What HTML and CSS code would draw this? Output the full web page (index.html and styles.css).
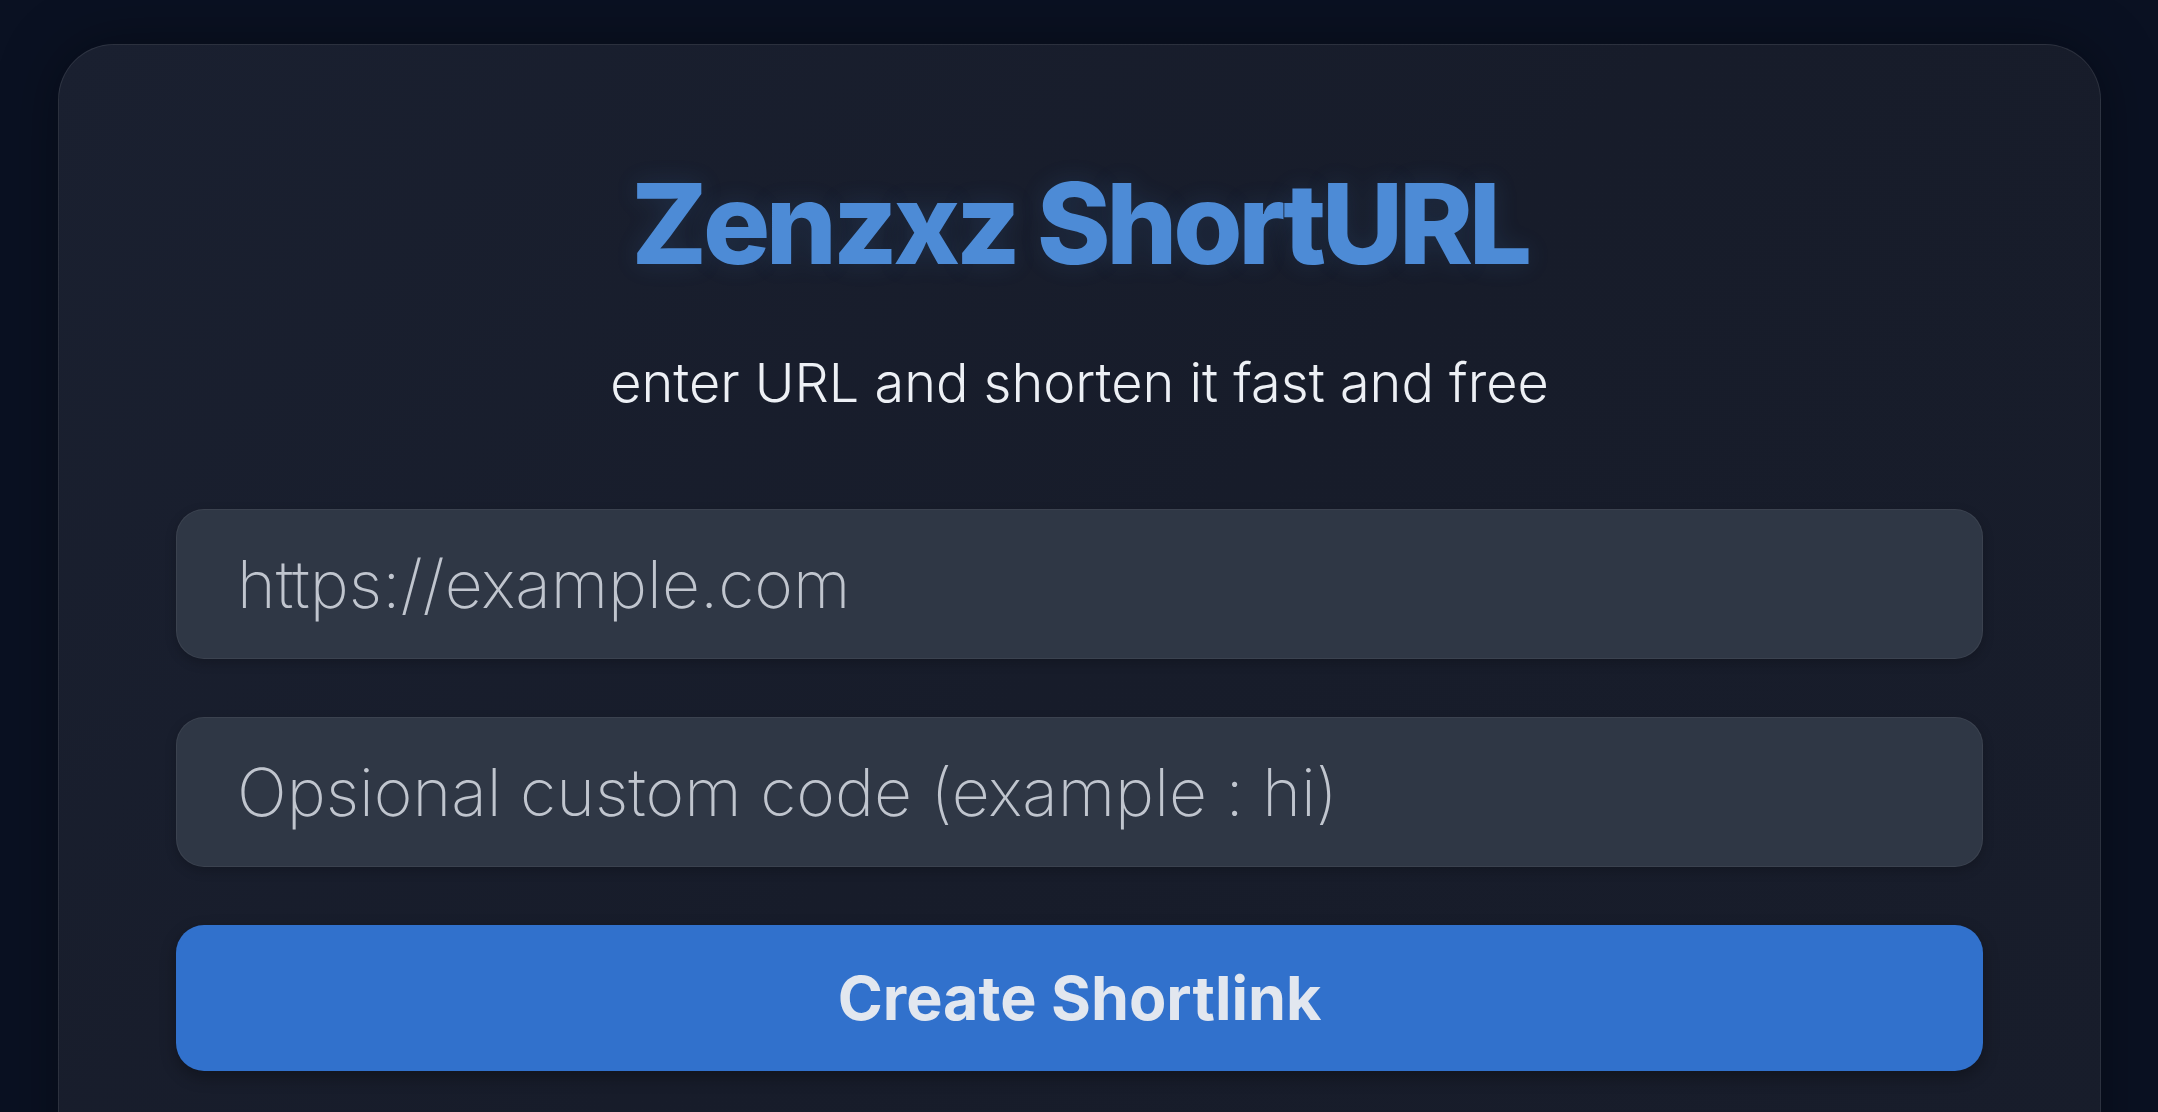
FILE: index.html
```html
<!DOCTYPE html>
<html lang="en">
<head>
<meta charset="utf-8">
<title>Zenzxz ShortURL</title>
<link rel="stylesheet" href="styles.css">
</head>
<body>
<main class="page">
  <section class="card">
    <h1 class="title">Zenzxz ShortURL</h1>
    <p class="subtitle">enter URL and shorten it fast and free</p>
    <form class="form">
      <input class="field" type="text" placeholder="https://example.com">
      <input class="field" type="text" placeholder="Opsional custom code (example : hi)">
      <button class="submit" type="button">Create Shortlink</button>
    </form>
  </section>
</main>
</body>
</html>
```
FILE: styles.css
```css
html, body {
  margin: 0;
  padding: 0;
  height: 100%;
  overflow: hidden;
}
body {
  background: #0a1122;
  font-family: "Inter", "Noto Sans", sans-serif;
}
.page {
  padding: 44px 57px 0 58px;
}
.card {
  box-sizing: border-box;
  min-height: 1200px;
  background: linear-gradient(135deg, #1a2030 0%, #171c2a 50%, #181d2b 100%);
  border: 1px solid rgba(255, 255, 255, 0.09);
  border-radius: 56px;
  padding: 122px 117px 0 117px;
  box-shadow: 0 0 60px rgba(0, 0, 0, 0.35);
  display: flex;
  flex-direction: column;
  align-items: center;
}
.title {
  margin: 0;
  font-size: 112px;
  line-height: 1;
  font-weight: 800;
  color: #4d8bd6;
  letter-spacing: -4.3px;
  text-shadow: 0 0 24px rgba(77, 139, 214, 0.15);
}
.subtitle {
  margin: 77px 0 0 0;
  font-size: 54px;
  line-height: 1;
  font-weight: 300;
  color: #edf0f5;
}
.form {
  width: 100%;
  margin-top: 99px;
  display: flex;
  flex-direction: column;
  gap: 58px;
}
.field {
  box-sizing: border-box;
  width: 100%;
  height: 150px;
  border: 1px solid rgba(255, 255, 255, 0.06);
  border-radius: 28px;
  background: #2f3745;
  padding: 0 0 0 60px;
  font-family: "Inter", "Noto Sans", sans-serif;
  font-size: 66px;
  font-weight: 200;
  color: #dfe3ea;
  outline: none;
  box-shadow: 0 4px 12px rgba(0, 0, 0, 0.2);
}
.field::placeholder {
  color: #c0c5ce;
  opacity: 1;
}
.submit {
  height: 146px;
  width: 100%;
  border: none;
  border-radius: 28px;
  background: #3171cc;
  color: #e2e7ef;
  font-family: "Inter", "Noto Sans", sans-serif;
  font-size: 61px;
  font-weight: 700;
  cursor: pointer;
  box-shadow: 0 6px 16px rgba(0, 0, 0, 0.3);
}
```
